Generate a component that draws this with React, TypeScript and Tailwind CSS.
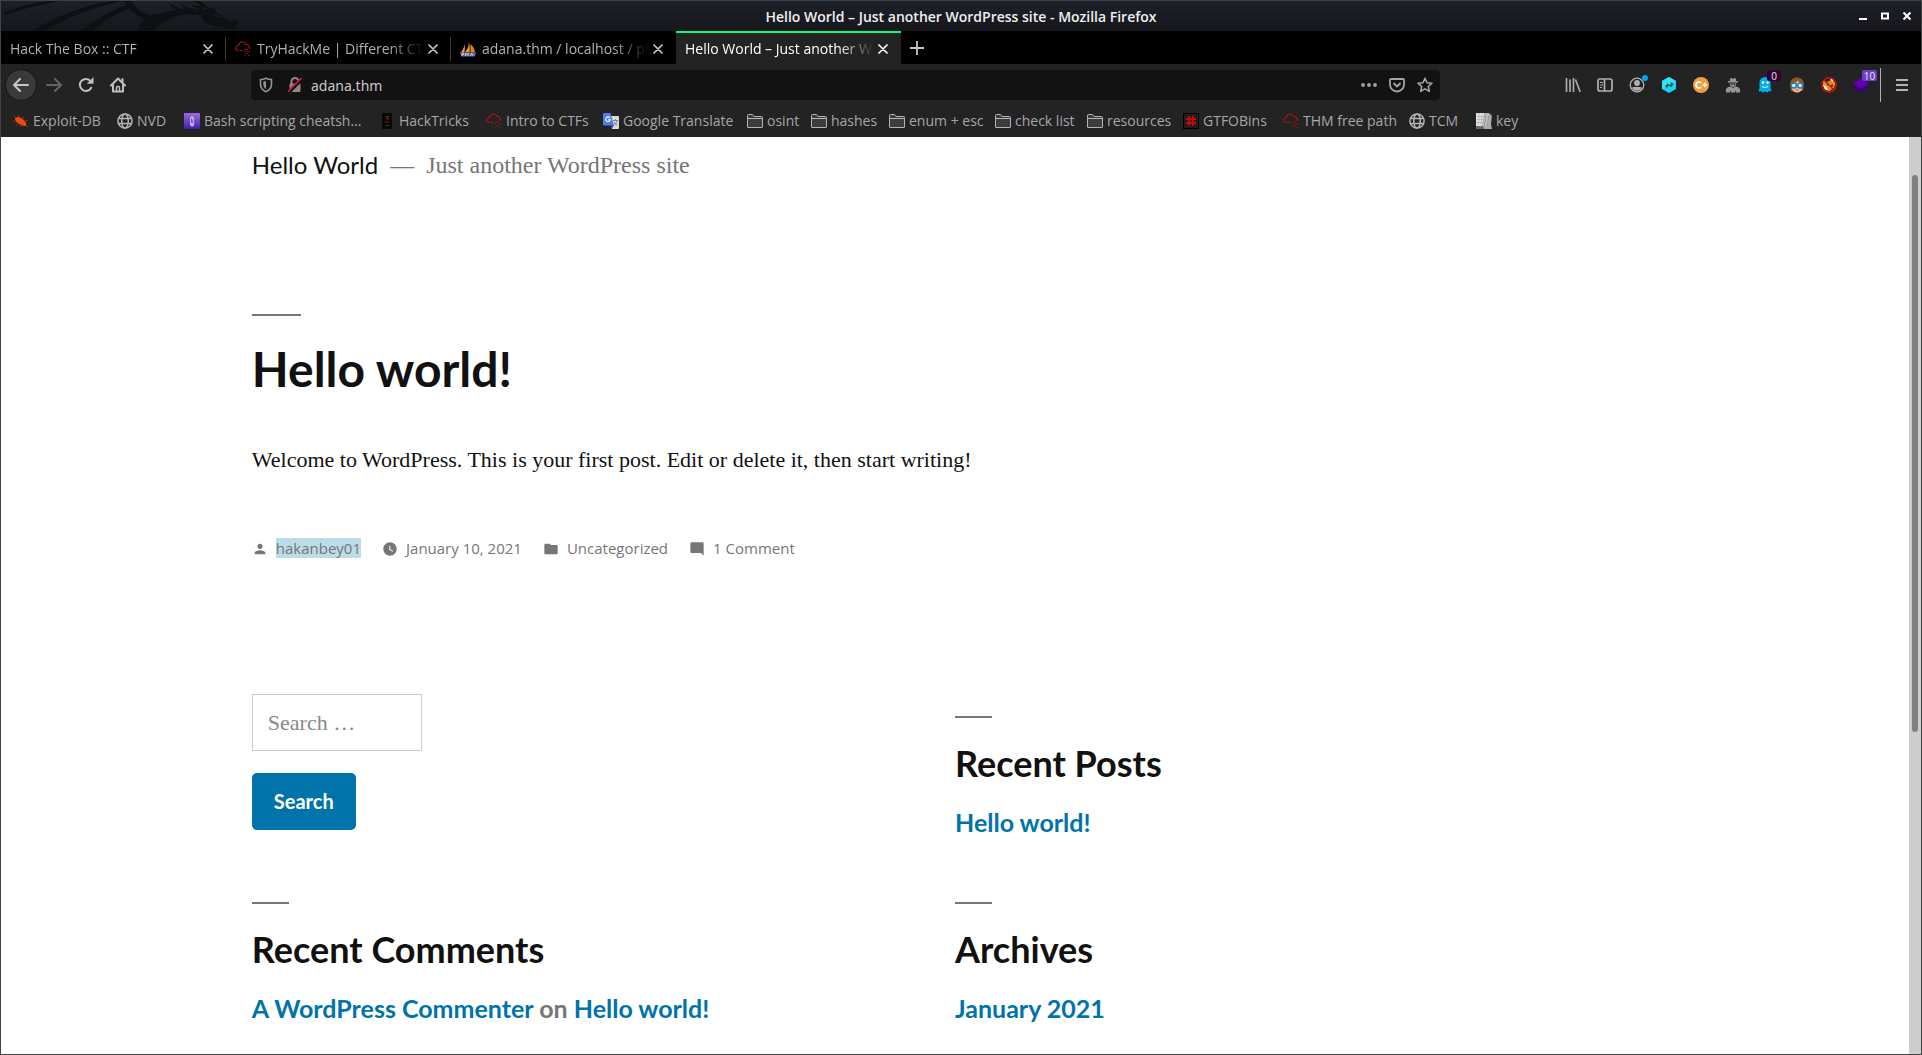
import React from 'react'
import type { ReactNode } from 'react'

const svg16 = 'block h-4 w-4 shrink-0'

function ThmIcon() {
  return (
    <svg viewBox="0 0 16 16" className={svg16} fill="none" stroke="#b01418" strokeWidth="1.100">
      <path d="M3.500 9.500H2.600A2.200 2.200 0 0 1 2 5.300a2 2 0 0 1 1.800-1.500A3.700 3.700 0 0 1 10.800 3.200A2.600 2.600 0 0 1 13.600 5.500A2 2 0 0 1 14.500 8" />
      <path d="M4.500 9.500h3" />
      <path d="M9 8.500h4M8.500 10.500h2M12 10.500h3M10 12.500h3M13 14.500h2M9 14.500h1.500" stroke="#7d1114" />
    </svg>
  )
}

function SailsIcon() {
  return (
    <svg viewBox="0 0 16 16" className={svg16}>
      <path d="M4 2.500C4.500 5 4 8 1 11h3.500C5 8 5 5 4 2.500Z" fill="#f7a32e" />
      <path d="M8.500 0C9.500 4 8 8 5.200 11H9.500C10 7 9.800 3 8.500 0Z" fill="#f9a11b" />
      <path d="M10.500 3c2.500 2 4 5 4.300 8h-4.300Z" fill="#e8870f" />
      <path d="M0 11.200h16l-1.200 4.300H1.200Z" fill="#6c6c9c" />
      <path d="M2 15v-3h1.500v1.500H2M5.500 15v-3l1.200 1.500L8 12v3M10.500 15l1.200-3 1.300 3" stroke="#c9c9e8" strokeWidth=".8" fill="none" />
    </svg>
  )
}

function CloseX({ color }: { color: string }) {
  return (
    <svg viewBox="0 0 10 10" className="block h-[10px] w-[10px]" stroke={color} strokeWidth="1.700" strokeLinecap="round">
      <path d="M1 1l8 8M9 1l-8 8" />
    </svg>
  )
}

function GlobeIcon() {
  return (
    <svg viewBox="0 0 16 16" className={svg16} fill="none" stroke="#b4b4b5" strokeWidth="1.500">
      <circle cx="8" cy="8" r="7.100" />
      <ellipse cx="8" cy="8" rx="3.300" ry="7.100" />
      <path d="M1.500 5.500h13M1.500 10.500h13" />
    </svg>
  )
}

function FolderIcon() {
  return (
    <svg viewBox="0 0 16 16" className={svg16} fill="#3c3c3d" stroke="#b4b4b5" strokeWidth="1">
      <path d="M.5 14V2.500a1 1 0 0 1 1-1h4l1.500 2h7.500a1 1 0 0 1 1 1V14a.5.5 0 0 1-.5.5H1a.5.5 0 0 1-.5-.5Z" />
      <path d="M.5 5.500h15" />
    </svg>
  )
}

function ExploitIcon() {
  return (
    <svg viewBox="0 0 16 16" className={svg16}>
      <path d="M2.500 4.500 5 4l3 1 3 2 2 3 .3 2.800L11 13 7 11.500 4 9.500 2 7Z" fill="#f0480c" />
      <path d="M3 5 1 3M6 4 5.500 2M9 5.500 11 4M12 8l3-.5M2.500 8 .5 8.500M5 10.500 3.500 12.500M8 12 8 14M13 12.500l2 1.500" stroke="#a8380f" strokeWidth=".8" />
    </svg>
  )
}

function BashIcon() {
  return (
    <svg viewBox="0 0 16 16" className={svg16}>
      <defs>
        <linearGradient id="bash" x1="0" y1="0" x2="0" y2="1">
          <stop offset="0" stopColor="#9a6be0" />
          <stop offset="1" stopColor="#3a22a8" />
        </linearGradient>
      </defs>
      <rect width="16" height="16" fill="url(#bash)" />
      <path d="M6 5 8 2.800 10.200 5v7L8 14 6 12Z" fill="#c4b0ee" />
      <path d="M7.500 5.500v4.500M8.800 6.500v4" stroke="#5a3cc0" strokeWidth=".8" />
    </svg>
  )
}

function HackTricksIcon() {
  return (
    <svg viewBox="0 0 16 16" className={svg16}>
      <rect x="3" width="10" height="16" rx="1" fill="#090705" />
      <path d="M6.500 3.500h3l-2 2.500h2.500" stroke="#9c1a1a" fill="none" />
      <path d="M5.500 9h5M6 12.500h4" stroke="#3d3318" strokeWidth="1" />
    </svg>
  )
}

function TranslateIcon() {
  return (
    <svg viewBox="0 0 16 16" className={svg16}>
      <path d="M6 3h9a1 1 0 0 1 1 1v11a1 1 0 0 1-1 1H9Z" fill="#dcdcdc" />
      <path d="M10 7.500h5M12.500 6v1.500M14.200 7.500c-.5 2.500-2 4-3.800 5M11 9c.8 1.600 2 2.600 3.500 3.300" stroke="#607d8b" strokeWidth=".9" fill="none" />
      <path d="M1 0h6.500L11 12.500H1a1 1 0 0 1-1-1V1a1 1 0 0 1 1-1Z" fill="#4f7bf0" />
      <path d="M7.500 12.500H11L8.800 15.500Z" fill="#3b30a8" />
      <path d="M6.800 4.800A2.300 2.300 0 1 0 7.200 6.800H5" stroke="#fff" strokeWidth="1.100" fill="none" />
    </svg>
  )
}

function GtfoIcon() {
  return (
    <svg viewBox="0 0 16 16" className={svg16}>
      <rect x=".5" y=".5" width="15" height="15" fill="#241c1c" stroke="#000" />
      <path d="M6 3v10M10 3v10M3 6h10M3 10h10" stroke="#c8090c" strokeWidth="1.800" />
    </svg>
  )
}

function KeyIcon() {
  return (
    <svg viewBox="0 0 16 16" className={svg16}>
      <path d="M0 0h13l3 2-1 9 1 5H0Z" fill="#a9a9a9" />
      <path d="M0 0h8L6 13H0Z" fill="#e2e2e2" />
      <path d="M1 3.500h7M1 6.500h6M0 9.500h7M3 0 2.500 12M6 0 5 12" stroke="#b0b0b0" strokeWidth=".7" />
      <path d="M9 1h5l-2 13H6.500Z" fill="#bdbdbd" />
      <path d="M10 2 8 14M13 2l-2 12" stroke="#8f8f8f" strokeWidth=".8" />
      <path d="M0 13h7l1 3H0Z" fill="#6a6a6a" />
      <path d="M13 0h3v3Z" fill="#333" />
    </svg>
  )
}

function KaliDragon() {
  return (
    <svg viewBox="0 0 780 92" className="block h-[30px] w-[260px]" aria-hidden="true">
      <g fill="#0f1014">
        <path d="M0 34C45 18 90 6 140 0h34C115 10 50 26 0 44Z" />
        <path d="M88 92C150 54 235 14 330 0h32C262 22 180 58 124 92Z" />
        <path d="M236 92C278 60 326 32 378 10l8 14C338 42 298 66 270 92Z" />
        <path d="M366 0h26c14 26 34 40 62 42 36-2 58-16 98-18l62 4c10-6 20-8 34-4l2 10 20 12c10 14 22 16 50 14l-14 28-52-10c-34-4-44-18-50-34-60-12-110 8-144 48h-50c4-20 14-30 24-36C406 50 384 22 366 0Z" />
        <path d="M506 4c4 14 14 22 28 22l14-2C528 18 514 14 506 4ZM540 6c6 12 16 20 36 20l8-2C562 20 550 14 540 6ZM574 10c8 10 20 16 40 18L604 14C594 16 584 14 574 10ZM580 0h22l26 20h-16C602 10 590 6 580 0Z" />
      </g>
      <path d="M640 40l24 10" stroke="#1b1c22" strokeWidth="4" />
    </svg>
  )
}

type TabInfo = { title: string; icon?: ReactNode; active?: boolean; divider?: boolean }

const tabs: TabInfo[] = [
  { title: 'Hack The Box :: CTF', divider: true },
  { title: 'TryHackMe | Different CT', icon: <ThmIcon />, divider: true },
  { title: 'adana.thm / localhost / ph', icon: <SailsIcon /> },
  { title: 'Hello World – Just another W', active: true },
]

function Tab({ title, icon, active, divider }: TabInfo) {
  return (
    <div
      className={
        active
          ? 'relative flex w-[225px] items-center border-t-2 border-[#00ff7f] bg-[#232323] pr-[13px] pl-[9px] text-white'
          : 'relative flex w-[225px] items-center pt-[2px] pr-[13px] pl-[9px] text-[#b1b1b3]'
      }
    >
      <button className="flex min-w-0 flex-1 items-center gap-[6px] text-left">
        {icon}
        <span className="flex-1 overflow-hidden whitespace-nowrap [mask-image:linear-gradient(to_right,black_calc(100%-40px),transparent_calc(100%-4px))]">
          {title}
        </span>
      </button>
      <button aria-label="Close tab">
        <CloseX color={active ? '#ffffff' : '#c8c8c8'} />
      </button>
      {divider && <span className="absolute top-[6px] right-0 h-6 w-px bg-[#38383a]" />}
    </div>
  )
}

const bookmarks: { label: string; icon: ReactNode; width: string }[] = [
  { label: 'Exploit-DB', icon: <ExploitIcon />, width: 'w-[92px]' },
  { label: 'NVD', icon: <GlobeIcon />, width: 'w-[55px]' },
  { label: 'Bash scripting cheatsh…', icon: <BashIcon />, width: 'w-[183px]' },
  { label: 'HackTricks', icon: <HackTricksIcon />, width: 'w-[95px]' },
  { label: 'Intro to CTFs', icon: <ThmIcon />, width: 'w-[105px]' },
  { label: 'Google Translate', icon: <TranslateIcon />, width: 'w-[132px]' },
  { label: 'osint', icon: <FolderIcon />, width: 'w-[52px]' },
  { label: 'hashes', icon: <FolderIcon />, width: 'w-[66px]' },
  { label: 'enum + esc', icon: <FolderIcon />, width: 'w-[94px]' },
  { label: 'check list', icon: <FolderIcon />, width: 'w-[80px]' },
  { label: 'resources', icon: <FolderIcon />, width: 'w-[84px]' },
  { label: 'GTFOBins', icon: <GtfoIcon />, width: 'w-[88px]' },
  { label: 'THM free path', icon: <ThmIcon />, width: 'w-[114px]' },
  { label: 'TCM', icon: <GlobeIcon />, width: 'w-[55px]' },
  { label: 'key', icon: <KeyIcon />, width: 'w-[44px]' },
]

function ToolButton({ label, children }: { label: string; children: ReactNode }) {
  return (
    <button aria-label={label} className="relative flex h-8 w-8 items-center justify-center">
      {children}
    </button>
  )
}

function Badge({ children, className }: { children: ReactNode; className: string }) {
  return (
    <span className={'absolute top-px flex h-[11px] items-center justify-center rounded-xs text-[10px] leading-none text-[#e6e6e6] ' + className}>
      {children}
    </span>
  )
}

function TitleBar() {
  return (
    <header className="relative flex h-[30px] items-center justify-center bg-linear-to-b from-[#1e2029] to-[#16171c]">
      <div className="absolute top-0 left-0">
        <KaliDragon />
      </div>
      <h1 className="relative pt-px text-sm font-semibold text-[#efefef]">Hello World – Just another WordPress site - Mozilla Firefox</h1>
      <div className="absolute top-0 right-2 flex h-full items-center gap-[10px]">
        <button aria-label="Minimize" className="flex h-3 w-3 items-center justify-center">
          <svg viewBox="0 0 12 12" className="h-3 w-3"><path d="M2 8h8v2H2Z" fill="#fff" /></svg>
        </button>
        <button aria-label="Maximize" className="flex h-3 w-3 items-center justify-center">
          <svg viewBox="0 0 12 12" className="h-3 w-3" fill="none"><path d="M3 3.500h6v5H3Z" stroke="#fff" strokeWidth="2" /></svg>
        </button>
        <button aria-label="Close window" className="flex h-3 w-3 items-center justify-center">
          <svg viewBox="0 0 12 12" className="h-3 w-3"><path d="M2.500 2.500l7 7M9.500 2.500l-7 7" stroke="#fff" strokeWidth="2" /></svg>
        </button>
      </div>
    </header>
  )
}

function NavBar() {
  return (
    <div className="flex h-[42px] items-center pr-[3px] pl-1">
      <div className="flex items-center">
        <button aria-label="Back" className="mr-px flex h-8 w-8 items-center justify-center rounded-full border border-[#161616] bg-[#3a3a3b]">
          <svg viewBox="0 0 16 16" className={svg16} fill="none" stroke="#c6c6c7" strokeWidth="2" strokeLinecap="round" strokeLinejoin="round"><path d="M15 8H1.500M7 2 1 8l6 6" /></svg>
        </button>
        <ToolButton label="Forward">
          <svg viewBox="0 0 16 16" className={svg16} fill="none" stroke="#646465" strokeWidth="2" strokeLinecap="round" strokeLinejoin="round"><path d="M1 8h13.500M9 2l6 6-6 6" /></svg>
        </ToolButton>
        <ToolButton label="Reload">
          <svg viewBox="0 0 16 16" className={svg16}><path d="M13.200 10.700A6 6 0 1 1 12.600 4.200" fill="none" stroke="#c0c0c1" strokeWidth="2" strokeLinecap="round" /><path d="M15.500 0v6a.7.7 0 0 1-.7.7h-6Z" fill="#c0c0c1" /></svg>
        </ToolButton>
        <ToolButton label="Home">
          <svg viewBox="0 0 16 16" className={svg16} fill="none" stroke="#c0c0c1" strokeWidth="2" strokeLinecap="round" strokeLinejoin="round"><path d="M1 8.500 8 1.500l7 7M3 8v6.500h10V8" /><path d="M6.500 14v-3.500a1 1 0 0 1 1-1h1a1 1 0 0 1 1 1V14" strokeWidth="1.400" /><path d="M12.500 2v3" /></svg>
        </ToolButton>
      </div>
      <div className="w-[117px]" />
      <div className="flex h-[30px] flex-1 items-center rounded-sm bg-[#121212] px-[7px]">
        <svg viewBox="0 0 16 16" className={svg16} aria-label="Tracking protection"><path d="M8 1.200C6 2.200 4 2.500 2.500 2.500V7c0 4 2.500 6.500 5.500 7.700C11 13.500 13.500 11 13.500 7V2.500C12 2.500 10 2.200 8 1.200Z" fill="none" stroke="#939394" strokeWidth="1.600" strokeLinejoin="round" /><path d="M8 4C7 4.500 6 4.700 5.300 4.700V7c0 2.500 1.200 4 2.700 5Z" fill="#939394" /></svg>
        <svg viewBox="0 0 16 16" className="ml-[13px] block h-4 w-4 shrink-0" aria-label="Connection not secure"><path d="M4.500 7V4.500a3.500 3.500 0 0 1 7 0V7" fill="none" stroke="#8b8b8c" strokeWidth="2" /><rect x="2.500" y="6.500" width="11" height="8.500" rx="1" fill="#8b8b8c" /><path d="M2 15 15 2" stroke="#121212" strokeWidth="3.500" /><path d="M1 14.500 14.500 1" stroke="#e8123c" strokeWidth="1.700" /></svg>
        <input aria-label="Address" defaultValue="adana.thm" className="ml-2 min-w-0 flex-1 bg-transparent pt-px font-['Noto_Sans',sans-serif] text-sm text-[#c9c9ca] outline-none" />
        <div className="flex items-center gap-3">
          <button aria-label="Page actions"><svg viewBox="0 0 16 16" className={svg16} fill="#a4a4a5"><circle cx="2" cy="8" r="1.900" /><circle cx="8" cy="8" r="1.900" /><circle cx="14" cy="8" r="1.900" /></svg></button>
          <button aria-label="Save to Pocket"><svg viewBox="0 0 16 16" className={svg16} fill="none" stroke="#a4a4a5" strokeWidth="1.800" strokeLinecap="round" strokeLinejoin="round"><path d="M2 2h12a1 1 0 0 1 1 1v4.500a7 7 0 0 1-14 0V3a1 1 0 0 1 1-1Z" /><path d="M5 6.500l3 3 3-3" /></svg></button>
          <button aria-label="Bookmark this page"><svg viewBox="0 0 16 16" className={svg16} fill="none" stroke="#a4a4a5" strokeWidth="1.600" strokeLinejoin="round"><path d="M8 1.200l2 4.500 5 .5-3.700 3.300 1 4.900L8 11.900l-4.300 2.500 1-4.900L1 6.200l5-.5Z" /></svg></button>
        </div>
      </div>
      <div className="w-[117px]" />
      <div className="flex items-center">
        <ToolButton label="Library"><svg viewBox="0 0 16 16" className={svg16} stroke="#b0b0b1" strokeWidth="1.600"><path d="M1.500 1v14M5 2.500V15M8.500 1v14M10.500 2.500l4.700 12.500" /></svg></ToolButton>
        <ToolButton label="Sidebars"><svg viewBox="0 0 16 16" className={svg16} fill="none" stroke="#b0b0b1" strokeWidth="1.700"><rect x="1" y="2" width="14" height="12" rx="2" /><path d="M7.500 2v12" /><path d="M3 5.500h3M3 8h3M3 10.500h2" strokeWidth="1" /></svg></ToolButton>
        <ToolButton label="Account"><svg viewBox="0 0 16 16" className={svg16}><circle cx="8" cy="8" r="6.800" fill="none" stroke="#b0b0b1" strokeWidth="1.300" /><circle cx="8" cy="6" r="2.900" fill="#b0b0b1" /><path d="M3 11c1-1.500 2.200-1 5-1s4-.5 5 1a6 6 0 0 1-10 0Z" fill="#b0b0b1" /></svg><span className="absolute top-[6px] right-[5px] h-[6px] w-[6px] rounded-full bg-[#00a6f5]" /></ToolButton>
        <ToolButton label="Request proxy"><svg viewBox="0 0 16 16" className={svg16}><path d="M8 0l7 4v8l-7 4-7-4V4Z" fill="#19d3ef" /><path d="M8 0l7 4-14 8V4Z" fill="#30e4f8" /><path d="M4 9.500 7 6v1.500h3L9.500 5l3 2L10 10.500 9 9H6.500v2Z" fill="#3f4a50" /></svg></ToolButton>
        <ToolButton label="Cookie manager"><svg viewBox="0 0 16 16" className={svg16}><circle cx="8" cy="8" r="8" fill="#f0a040" /><path d="M8 5.800A3 3 0 1 0 8 10.200M9.500 8H14M11.800 5.800v4.400" fill="none" stroke="#fff" strokeWidth="1.600" /></svg></ToolButton>
        <ToolButton label="User agent"><svg viewBox="0 0 16 16" className={svg16} fill="#969697"><path d="M5 1.500 6.500 1 8 2l1.500-1 1.500.5V4h2v1.500H3V4h2ZM4.500 6.500h7L10.500 9 8 10 5.500 9ZM3 10l3-.5L8 11l2-1.500 3 .5 2 2v3.500h-4V13l-1 2.500H6L5 13v2.500H1V12Z" /><path d="M6 7.500h1.500M8.500 7.500H10" stroke="#232323" /></svg></ToolButton>
        <ToolButton label="Ghostery"><svg viewBox="0 0 16 16" className={svg16}><path d="M8 0a5.500 5.500 0 0 0-5.500 5.500V11L1.500 14.500 4 14l1.500 1.500L8 14.500l2.500 1L12 14l2.500.5L13.500 11V5.500A5.500 5.500 0 0 0 8 0Z" fill="#00aef0" /><circle cx="6" cy="5.500" r="1.200" fill="#fff" /><circle cx="10.500" cy="5.500" r="1.200" fill="#fff" /><path d="M5 9c1.500 2 4.500 2 6 0" stroke="#fff" fill="none" strokeWidth="1.100" /></svg><Badge className="right-0 w-[14px] bg-[#330033]">0</Badge></ToolButton>
        <ToolButton label="Privacy helper"><svg viewBox="0 0 16 16" className={svg16}><path d="M1 8C1 3 4 .5 8 .5S15 3 15 8l-1 6H2Z" fill="#8a5a1e" /><path d="M3 6.500C6 6 8 5 9 3.500c1 2 2.500 3 4 3.500v4.500c0 2-2 4-5 4s-5-2-5-4Z" fill="#f0b98a" /><circle cx="4.800" cy="8.500" r="2.500" fill="#e8f4ff" stroke="#1a78c8" strokeWidth="1.400" /><circle cx="11.200" cy="8.500" r="2.500" fill="#e8f4ff" stroke="#1a78c8" strokeWidth="1.400" /><path d="M6.500 13h3" stroke="#b05a3a" /></svg></ToolButton>
        <ToolButton label="FoxyProxy"><svg viewBox="0 0 16 16" className={svg16}><path d="M2 3.500 6 5l5-2.500L14.500 6 13 11l-5 3.500-4-2L2 9Z" fill="#e88a1e" /><path d="M2 8l3 1 2 4-3-.5ZM9 2l3-.5V5Z" fill="#f4f0ea" /><path d="M6 7.500h2M10 8.500h2" stroke="#222" strokeWidth="1.500" /><circle cx="8" cy="8" r="7.200" fill="none" stroke="#d01010" strokeWidth="1.400" /><path d="M3 3l10 10" stroke="#d01010" strokeWidth="1.400" /></svg></ToolButton>
        <ToolButton label="Layers"><svg viewBox="0 0 16 16" className={svg16}><path d="M8 5l8 5-8 6-8-6Z" fill="#3a0078" /><path d="M8 1l8 5.500L8 12 0 6.500Z" fill="#6200b0" /></svg><Badge className="right-0 w-[15px] bg-[#6b3fc4]">10</Badge></ToolButton>
        <span className="mr-[5px] ml-[3px] h-[34px] w-px bg-[#b0b0b1]" />
        <ToolButton label="Menu"><svg viewBox="0 0 16 16" className={svg16} stroke="#b4b4b5" strokeWidth="2"><path d="M2 3h12M2 8h12M2 13h12" /></svg></ToolButton>
      </div>
    </div>
  )
}

const link = 'text-[#0073aa] hover:text-[#005177]'

function Widget({ title, children }: { title: string; children: ReactNode }) {
  return (
    <section className="pt-[22px] font-[Lato,sans-serif] font-bold">
      <div className="mb-6 h-[2px] w-[37px] bg-[#767676]" />
      <h2 className="text-4xl leading-[43px] text-[#111]">{title}</h2>
      <p className="mt-[22px] text-[25px] leading-[30px] text-[#767676]">{children}</p>
    </section>
  )
}

function Meta({ icon, children }: { icon: string; children: ReactNode }) {
  return (
    <li className="flex items-center gap-2">
      <svg viewBox="0 0 24 24" className="mt-[2px] block h-4 w-4 shrink-0" fill="#767676" fillRule="evenodd"><path d={icon} /></svg>
      <a href="#post" className="leading-5">{children}</a>
    </li>
  )
}

function BlogPage() {
  return (
    <main className="flex-1 bg-white">
      <div className="mx-[calc(10%+60px)] pt-3 pb-[30px]">
        <div className="flex text-2xl leading-8">
          <a href="#home" className="font-[Lato,sans-serif] text-[#111]">Hello World</a>
          <p className="flex font-['Liberation_Serif',serif] text-[#767676]">
            <span className="mx-3">—</span>Just another WordPress site
          </p>
        </div>

        <article id="post" className="mt-[133px]">
          <div className="h-[2px] w-[49px] bg-[#767676]" />
          <h2 className="mt-6 font-[Lato,sans-serif] text-5xl leading-[58px] font-bold text-[#111]">Hello world!</h2>
          <p className="mt-[42px] font-['Liberation_Serif',serif] text-[22px] leading-10 text-[#111]">
            Welcome to WordPress. This is your first post. Edit or delete it, then start writing!
          </p>
          <ul className="mt-[58px] flex gap-[21px] text-[15px] text-[#767676]">
            <Meta icon="M12 12c2.210 0 4-1.790 4-4s-1.790-4-4-4-4 1.790-4 4 1.790 4 4 4zm0 2c-2.670 0-8 1.340-8 4v2h16v-2c0-2.660-5.330-4-8-4z">
              <span className="block bg-[#bcdcea]">hakanbey01</span>
            </Meta>
            <Meta icon="M12 2C6.500 2 2 6.500 2 12s4.500 10 10 10 10-4.500 10-10S17.500 2 12 2zm4.200 14.200L11 13V7h1.500v5.200l4.500 2.700-.8 1.300z">January 10, 2021</Meta>
            <Meta icon="M10 4H4c-1.100 0-2 .9-2 2v12c0 1.100.9 2 2 2h16c1.100 0 2-.9 2-2V8c0-1.100-.9-2-2-2h-8l-2-2z">Uncategorized</Meta>
            <Meta icon="M22 4c0-1.100-.9-2-2-2H4c-1.100 0-2 .9-2 2v12c0 1.100.9 2 2 2h14l4 4V4z">1 Comment</Meta>
          </ul>
        </article>

        <aside className="mt-[136px] grid grid-cols-2 gap-y-[43px]">
          <form className="flex flex-col items-start gap-[22px]" onSubmit={(e) => e.preventDefault()}>
            <input
              type="search"
              aria-label="Search for"
              placeholder="Search …"
              className="h-[57px] w-[170px] border border-[#ccc] px-[15px] font-['Liberation_Serif',serif] text-[22px] placeholder:text-[#888]"
            />
            <button className="rounded-[5px] bg-[#0073aa] px-[22px] font-[Lato,sans-serif] text-xl leading-[57px] font-bold text-white">Search</button>
          </form>
          <Widget title="Recent Posts"><a href="#post" className={link}>Hello world!</a></Widget>
          <Widget title="Recent Comments">
            <a href="#author" className={link}>A WordPress Commenter</a> on <a href="#post" className={link}>Hello world!</a>
          </Widget>
          <Widget title="Archives"><a href="#archive" className={link}>January 2021</a></Widget>
        </aside>
      </div>
    </main>
  )
}

export default function App() {
  return (
    <div className="flex min-h-screen flex-col border border-[#424443] bg-[#232323] font-['Open_Sans',sans-serif]">
      <TitleBar />
      <nav aria-label="Tabs" className="flex h-[33px] items-stretch bg-black text-sm">
        {tabs.map((t) => <Tab key={t.title} {...t} />)}
        <button aria-label="New tab" className="ml-2 flex w-4 items-center justify-center">
          <svg viewBox="0 0 14 14" className="h-[14px] w-[14px] shrink-0" stroke="#c8c8c8" strokeWidth="1.800"><path d="M7 0v14M0 7h14" /></svg>
        </button>
      </nav>
      <NavBar />
      <nav aria-label="Bookmarks" className="flex h-[31px] items-center gap-3 pb-[2px] pl-3 text-sm text-[#a7a7a8]">
        {bookmarks.map((b) => (
          <a key={b.label} href="#bookmark" className={'flex shrink-0 items-center gap-1 whitespace-nowrap ' + b.width}>
            {b.icon}
            <span className="flex-1">{b.label}</span>
          </a>
        ))}
      </nav>
      <div className="flex flex-1">
        <BlogPage />
        <div className="flex w-3 justify-center bg-[#cdcdcd] pt-[38px]">
          <div className="h-[557px] w-[6px] rounded-full bg-[#7d8181]" />
        </div>
      </div>
    </div>
  )
}
